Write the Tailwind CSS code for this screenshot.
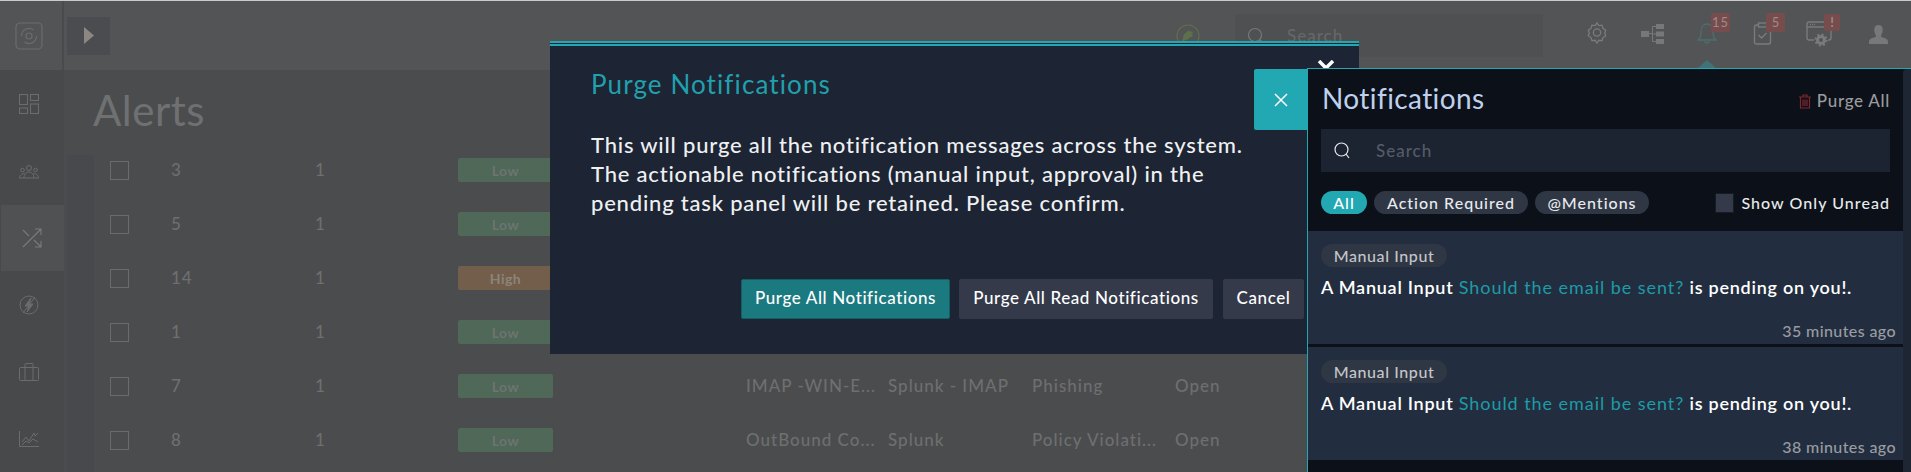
<!DOCTYPE html>
<html lang="en">
<head>
  <meta charset="UTF-8" />
  <meta name="viewport" content="width=device-width, initial-scale=1.0" />
  <title>Alerts - Purge Notifications</title>
  <script src="https://cdn.jsdelivr.net/npm/@tailwindcss/browser@4"></script>
</head>
<body class="relative h-[472px] overflow-hidden bg-[#4b4c4e] font-['Lato',sans-serif] text-[#6e6f70]">

  <!-- page behind the dim layer -->
  <div class="h-px bg-[#c9cacb]"></div>
  <header class="flex h-[69px] items-center bg-[#535456]">
    <div class="flex h-full w-[64px] shrink-0 items-center border-r-2 border-[#4a4b4d] pl-[15px]">
      <svg class="h-[28px] w-[28px]" viewBox="0 0 28 28" fill="none" stroke="#6b6c6e" stroke-width="1.2"><rect x="1" y="1" width="26" height="26" rx="4"/><path d="M6.500 14a7.500 7.500 0 0 1 12-6M21.500 14a7.500 7.500 0 0 1-12 6"/><circle cx="14" cy="14" r="3"/></svg>
    </div>
    <div class="ml-[3px] flex h-[38px] w-[43px] items-center justify-center bg-[#4b4c50]">
      <svg class="h-[17px] w-[10px]" viewBox="0 0 10 17"><path d="M0 0l10 8.500L0 17z" fill="#8b8781"/></svg>
    </div>
    <svg class="ml-[1066px] h-[24px] w-[24px]" viewBox="0 0 24 24" fill="none"><circle cx="12" cy="12" r="11" stroke="#5d7049" stroke-width="1.100"/><path d="M7 14c0-3 2-5 4-6l2-2 1 2 2-1 1 2-2 1 2 1-1 2-2 0c-1 2-3 3-5 3l-2 2-1-1 1-3z" fill="#5d7049"/></svg>
    <div class="ml-[35px] flex h-[43px] w-[308px] items-center bg-[#4f5052] pl-[12px]">
      <svg class="h-[18px] w-[18px]" viewBox="0 0 18 18" fill="none" stroke="#77787a" stroke-width="1.2"><circle cx="8" cy="8" r="6.500"/><path d="M12.500 12.500l4 4"/></svg>
      <span class="ml-[22px] text-[17px] font-medium tracking-[1px] text-[#666769]">Search</span>
    </div>
    <div class="relative ml-auto h-full w-[326px]">
      <svg class="absolute left-[1px] top-[20px] h-[23px] w-[22px]" viewBox="0 0 24 24" fill="none" stroke="#7a7b7d" stroke-width="1.400"><path d="M12 1.500l2 3 3.500-.5 1 3.500 3 2-1 3 1 3-3 2-1 3.500-3.500-.5-2 3-2-3-3.500.5-1-3.500-3-2 1-3-1-3 3-2 1-3.500 3.500.5z"/><circle cx="12" cy="12" r="4"/></svg>
      <svg class="absolute left-[56px] top-[23px] h-[20px] w-[24px]" viewBox="0 0 24 20" fill="#77787a"><rect x="0" y="7" width="8" height="6"/><rect x="15" y="0" width="8" height="5"/><rect x="15" y="7.500" width="8" height="5"/><rect x="15" y="15" width="8" height="5"/><path d="M8 9.500h3.500M11.500 2.500v15M11.500 2.500H15M11.500 10H15M11.500 17.500H15" fill="none" stroke="#77787a"/></svg>
      <svg class="absolute left-[112px] top-[21px] h-[23px] w-[20px]" viewBox="0 0 20 23" fill="none" stroke="#4e6d70" stroke-width="1.300"><path d="M1 18c2-2 3-3 3-8s2.500-8 6-8 6 3 6 8 1 6 3 8z"/><path d="M8 19a2 2 0 0 0 4 0"/></svg>
      <span class="absolute left-[126px] top-[12px] flex h-[19px] w-[19px] items-center justify-center rounded-[2px] bg-[#764c4c] text-[13px] tracking-[1px] text-[#a08a8a]">15</span>
      <svg class="absolute left-[168px] top-[21px] h-[23px] w-[19px]" viewBox="0 0 18 23" fill="none" stroke="#7a7b7d" stroke-width="1.400"><rect x="1" y="3" width="16" height="19" rx="2"/><rect x="5" y="1" width="8" height="4" fill="#535456"/><path d="M5 13l3 3 5-5"/></svg>
      <span class="absolute left-[181px] top-[12px] flex h-[19px] w-[19px] items-center justify-center rounded-[2px] bg-[#764c4c] text-[13px] text-[#a08a8a]">5</span>
      <svg class="absolute left-[221px] top-[20px] h-[26px] w-[28px]" viewBox="0 0 28 26" fill="none" stroke="#7a7b7d" stroke-width="1.400"><path d="M8 19H3a2 2 0 0 1-2-2V3a2 2 0 0 1 2-2h20a2 2 0 0 1 2 2v14a2 2 0 0 1-2 2h-1"/><path d="M1 6h24"/><path d="M4 3.500h5" stroke-dasharray="1 1"/><circle cx="15" cy="19" r="3.500" stroke-width="3"/><circle cx="15" cy="19" r="5.500" stroke-width="2" stroke-dasharray="2 2.300"/></svg>
      <span class="absolute left-[239px] top-[13px] flex h-[17px] w-[16px] items-center justify-center rounded-[2px] bg-[#764c4c] text-[13px] font-bold text-[#a08a8a]">!</span>
      <svg class="absolute left-[284px] top-[24px] h-[19px] w-[19px]" viewBox="0 0 20 20" fill="#77787a"><path d="M10 0c3 0 4.500 2 4.500 5S13 10 12.500 12c2 1.500 7.500 1.500 7.500 5.500V20H0v-2.500C0 13.500 5.500 13.500 7.500 12 7 10 5.500 8 5.500 5S7 0 10 0z"/></svg>
    </div>
  </header>

  <div class="flex h-[402px]">
    <nav class="flex w-[64px] shrink-0 flex-col bg-[#48494b] pl-px">
      <a class="flex h-[68px] items-center pl-[18px]"><svg class="h-[20px] w-[20px]" viewBox="0 0 20 20" fill="none" stroke="#6b6c6e" stroke-width="1.100"><rect x=".5" y=".5" width="8" height="10"/><rect x="11.500" y=".5" width="8" height="6"/><rect x=".5" y="14" width="8" height="5.500"/><rect x="11.500" y="10" width="8" height="9.500"/></svg></a>
      <a class="flex h-[67px] items-center pl-[18px]"><svg class="h-[14px] w-[20px]" viewBox="0 0 20 14" fill="none" stroke="#6b6c6e" stroke-width="1"><circle cx="10" cy="3" r="2.500"/><circle cx="3.500" cy="5" r="1.800"/><circle cx="16.500" cy="5" r="1.800"/><path d="M.5 13c0-4 4-4.500 5-4.500M19.500 13c0-4-4-4.500-5-4.500M5 13c0-4 2.500-6 5-6s5 2 5 6M.5 13h19"/></svg></a>
      <a class="flex h-[66px] items-center bg-[#505153] pl-[21px]"><svg class="h-[20px] w-[20px]" viewBox="0 0 20 20" fill="none" stroke="#7a7b7d" stroke-width="1.100"><path d="M1 2l6 6M12 12l7 7M1 19L19 1M13 1h6v6M19 13v6h-6"/></svg></a>
      <a class="flex h-[67px] items-center pl-[18px]"><svg class="h-[20px] w-[20px]" viewBox="0 0 20 20" fill="none" stroke="#6b6c6e" stroke-width="1"><circle cx="10" cy="10" r="9"/><path d="M12 3L6 11h4l-2 6 6-8h-4z" fill="#6b6c6e"/><path d="M16 2L4 18"/></svg></a>
      <a class="flex h-[67px] items-center pl-[18px]"><svg class="h-[18px] w-[20px]" viewBox="0 0 20 18" fill="none" stroke="#6b6c6e" stroke-width="1"><rect x=".5" y="4.500" width="19" height="13" rx="1"/><path d="M6 17.500v-13M14 17.500v-13M6 4.500V1.500a1 1 0 0 1 1-1h6a1 1 0 0 1 1 1v3"/></svg></a>
      <a class="flex h-[67px] items-center pl-[18px]"><svg class="h-[16px] w-[20px]" viewBox="0 0 20 16" fill="none" stroke="#6b6c6e" stroke-width="1"><path d="M.5 0v15.500h19.500M3 11l4-5 3 4 5-8 1 3 3-3M3 14l4-4 3 2 4-4 5 3"/></svg></a>
    </nav>
    <main class="min-w-0 flex-1 pl-[3px]">
      <h1 class="ml-[26px] flex h-[85px] items-start pt-[16px] text-[42px] leading-[48px] tracking-[0.5px] text-[#6f7071]">Alerts</h1>
      <div class="flex">
        <div class="h-[320px] w-[27px] shrink-0 bg-[#48494d]"></div>
        <div class="flex-1 -mt-[12px] text-[17px] font-medium tracking-[1px]">
          <div class="grid h-[54px] grid-cols-[61px_144px_143px_288px_142px_144px_143px_80px] items-center pl-[16px]">
            <span class="h-[19px] w-[19px] border border-[#6a6b6d]"></span><span>3</span><span>1</span><span class="flex h-[24px] w-[95px] items-center justify-center rounded-[2px] bg-[#4f6857] text-[14px] font-bold tracking-[0.5px] text-[#6d7472]">Low</span>
          </div>
          <div class="grid h-[54px] grid-cols-[61px_144px_143px_288px_142px_144px_143px_80px] items-center pl-[16px]">
            <span class="h-[19px] w-[19px] border border-[#6a6b6d]"></span><span>5</span><span>1</span><span class="flex h-[24px] w-[95px] items-center justify-center rounded-[2px] bg-[#4f6857] text-[14px] font-bold tracking-[0.5px] text-[#6d7472]">Low</span>
          </div>
          <div class="grid h-[54px] grid-cols-[61px_144px_143px_288px_142px_144px_143px_80px] items-center pl-[16px]">
            <span class="h-[19px] w-[19px] border border-[#6a6b6d]"></span><span>14</span><span>1</span><span class="flex h-[24px] w-[95px] items-center justify-center rounded-[2px] bg-[#735e4c] text-[14px] font-bold tracking-[0.5px] text-[#8c8478]">High</span>
          </div>
          <div class="grid h-[54px] grid-cols-[61px_144px_143px_288px_142px_144px_143px_80px] items-center pl-[16px]">
            <span class="h-[19px] w-[19px] border border-[#6a6b6d]"></span><span>1</span><span>1</span><span class="flex h-[24px] w-[95px] items-center justify-center rounded-[2px] bg-[#4f6857] text-[14px] font-bold tracking-[0.5px] text-[#6d7472]">Low</span>
          </div>
          <div class="grid h-[54px] grid-cols-[61px_144px_143px_288px_142px_144px_143px_80px] items-center pl-[16px]">
            <span class="h-[19px] w-[19px] border border-[#6a6b6d]"></span><span>7</span><span>1</span><span class="flex h-[24px] w-[95px] items-center justify-center rounded-[2px] bg-[#4f6857] text-[14px] font-bold tracking-[0.5px] text-[#6d7472]">Low</span>
            <span class="whitespace-nowrap">IMAP -WIN-E...</span><span class="whitespace-nowrap">Splunk - IMAP</span><span>Phishing</span><span>Open</span>
          </div>
          <div class="grid h-[54px] grid-cols-[61px_144px_143px_288px_142px_144px_143px_80px] items-center pl-[16px]">
            <span class="h-[19px] w-[19px] border border-[#6a6b6d]"></span><span>8</span><span>1</span><span class="flex h-[24px] w-[95px] items-center justify-center rounded-[2px] bg-[#4f6857] text-[14px] font-bold tracking-[0.5px] text-[#6d7472]">Low</span>
            <span class="whitespace-nowrap">OutBound Co...</span><span>Splunk</span><span class="whitespace-nowrap">Policy Violati...</span><span>Open</span>
          </div>
        </div>
      </div>
    </main>
  </div>

  <!-- purge confirmation modal -->
  <section class="absolute left-[550px] top-[41px] h-[313px] w-[809px] bg-[#1d2433]">
    <div class="h-[2px] bg-[#21a8b2]"></div>
    <div class="mt-[1px] h-[2px] bg-[#21a8b2]"></div>
    <h2 class="ml-[41px] mt-[22px] text-[26px] leading-[32px] tracking-[1.1px] text-[#21a0ad]">Purge Notifications</h2>
    <p class="ml-[41px] mt-[30px] text-[22px] font-medium leading-[29px] tracking-[0.8px] text-[#eef0f2]">This will purge all the notification messages across the system.<br>The actionable notifications (manual input, approval) in the<br>pending task panel will be retained. Please confirm.</p>
    <div class="absolute left-[191px] top-[238px] flex gap-[9px] text-[17px] font-medium tracking-[0.6px] text-white">
      <button class="h-[40px] w-[209px] rounded-[2px] border border-[#135f66] bg-[#1b7a80] pb-[2px]">Purge All Notifications</button>
      <button class="h-[40px] w-[254px] rounded-[2px] bg-[#343a4a] pb-[2px]">Purge All Read Notifications</button>
      <button class="ml-px h-[40px] w-[81px] rounded-[2px] bg-[#343a4a] pb-[2px]">Cancel</button>
    </div>
    <svg class="absolute left-[767px] top-[19px] h-[16px] w-[18px]" viewBox="0 0 18 16" fill="none" stroke="#fff" stroke-width="3.500"><path d="M2 1l14 14M16 1L2 15"/></svg>
  </section>

  <!-- arrow under the bell -->
  <div class="absolute left-[1698px] top-[60px] h-0 w-0 border-x-[9px] border-b-[8px] border-x-transparent border-b-[#3f7377]"></div>

  <!-- notifications drawer -->
  <div class="absolute left-[1254px] top-[69px] flex h-[61px] w-[54px] items-center justify-center rounded-l-[2px] bg-[#21a8b2]">
    <svg class="h-[14px] w-[14px]" viewBox="0 0 14 14" fill="none" stroke="#fff" stroke-width="1.500"><path d="M1 1l12 12M13 1L1 13"/></svg>
  </div>
  <aside class="absolute left-[1307px] top-[68px] h-[404px] w-[604px] border-l border-t border-[#21a8b2] bg-[#0c1018]">
    <div class="absolute right-0 top-0 h-full w-[8px] rounded-tl-[4px] bg-[#1e2633]"></div>
    <div class="mr-[21px] flex items-center justify-between pl-[14px] pt-[11px]">
      <h2 class="text-[28px] leading-[36px] tracking-[0.4px] text-[#bfd0ee]">Notifications</h2>
      <span class="mt-[6px] flex items-center gap-[6px] text-[17px] font-medium tracking-[0.7px] text-[#9a9b9d]">
        <svg class="h-[15px] w-[12px]" viewBox="0 0 12 15" fill="none" stroke="#7d2730" stroke-width="1.200"><path d="M0 3h12M4 3V1h4v2M1.500 3v11h9V3M4 5.500V12M6 5.500V12M8 5.500V12"/></svg>
        Purge All
      </span>
    </div>
    <div class="ml-[13px] mt-[13px] flex h-[43px] w-[569px] items-center bg-[#1c2331] pl-[13px]">
      <svg class="h-[17px] w-[16px]" viewBox="0 0 16 17" fill="none" stroke="#e8eaee" stroke-width="1.200"><circle cx="7.500" cy="7.500" r="6.500"/><path d="M12 12l3 4"/></svg>
      <span class="ml-[26px] text-[17px] font-medium tracking-[1px] text-[#555b67]">Search</span>
    </div>
    <div class="ml-[13px] mt-[19px] flex h-[23px] w-[569px] items-center gap-[7px] text-[16px] font-medium tracking-[1px] text-[#e8eaee]">
      <span class="flex h-[23px] w-[46px] items-center justify-center rounded-full bg-[#21a8b2] text-white">All</span>
      <span class="flex h-[23px] w-[154px] items-center justify-center rounded-full bg-[#2f3644]">Action Required</span>
      <span class="flex h-[23px] w-[114px] items-center justify-center rounded-full bg-[#2f3644]">@Mentions</span>
      <span class="ml-auto flex items-center gap-[7px] tracking-[1.05px]"><span class="h-[20px] w-[19px] border border-[#161b25] bg-[#343a4a]"></span>Show Only Unread</span>
    </div>
    <article class="mt-[17px] h-[113px] w-[595px] bg-[#222e3f] pl-[13px] pr-[7px] pt-[13px]">
      <span class="flex h-[23px] w-[126px] items-center justify-center rounded-full bg-[#2f3644] text-[16px] font-medium tracking-[0.6px] text-[#c4c6ca]">Manual Input</span>
      <p class="mt-[9px] text-[18px] font-semibold leading-[22px] tracking-[0.75px] text-white">A Manual Input <span class="font-normal tracking-[0.95px] text-[#1e9ba6]">Should the email be sent?</span> is pending on you!.</p>
      <p class="mt-[23px] text-right text-[16px] font-medium leading-[20px] tracking-[0.4px] text-[#999ca1]">35 minutes ago</p>
    </article>
    <article class="mt-[3px] h-[113px] w-[595px] bg-[#222e3f] pl-[13px] pr-[7px] pt-[13px]">
      <span class="flex h-[23px] w-[126px] items-center justify-center rounded-full bg-[#2f3644] text-[16px] font-medium tracking-[0.6px] text-[#c4c6ca]">Manual Input</span>
      <p class="mt-[9px] text-[18px] font-semibold leading-[22px] tracking-[0.75px] text-white">A Manual Input <span class="font-normal tracking-[0.95px] text-[#1e9ba6]">Should the email be sent?</span> is pending on you!.</p>
      <p class="mt-[23px] text-right text-[16px] font-medium leading-[20px] tracking-[0.4px] text-[#999ca1]">38 minutes ago</p>
    </article>
  </aside>
</body>
</html>
